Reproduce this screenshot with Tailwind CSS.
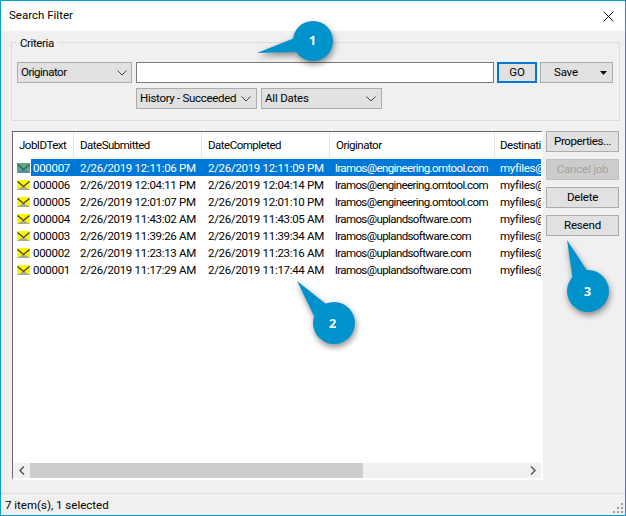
<!DOCTYPE html>
<html lang="en">
<head>
  <meta charset="UTF-8">
  <title>Search Filter</title>
  <script src="https://cdn.jsdelivr.net/npm/@tailwindcss/browser@4"></script>
</head>
<body class="bg-white">
  <div class="relative flex flex-col w-[626px] h-[516px] overflow-hidden border border-[#0a9ad0] bg-[#f0f0f0] font-['Roboto',sans-serif] text-[11.5px] leading-[16px] tracking-[-0.2px] text-black">
    <!-- Title bar -->
    <div class="flex items-center justify-between h-[30px] shrink-0 bg-white pl-[8px] pr-[10px]">
      <span class="pb-[2px] text-[11.5px] tracking-[0px]">Search Filter</span>
      <svg width="11" height="11" viewBox="0 0 11 11" class="mr-[1px]"><path d="M.5.5l10 10M10.5.5l-10 10" stroke="#111" fill="none"/></svg>
    </div>

    <!-- Criteria -->
    <div class="relative mt-[11px] ml-[10px] w-[609px] h-[79px] shrink-0 border border-[#dcdcdc] px-[5px] pt-[19px]">
      <span class="absolute left-[4px] top-[-8px] bg-[#f0f0f0] px-[4px] tracking-[-0.4px]">Criteria</span>
      <div class="flex h-[21px]">
        <div class="flex items-center justify-between w-[115px] border border-[#adadad] bg-[#e1e1e1] pl-[3px] pr-[4px]">
          <span class="pb-[2px] tracking-[-0.5px]">Originator</span>
          <svg width="10" height="6" viewBox="0 0 10 6"><path d="M.5.5L5 5 9.500.5" stroke="#444" fill="none"/></svg>
        </div>
        <div class="ml-[4px] w-[358px] border border-[#7a7a7a] bg-white"></div>
        <div class="flex items-center justify-center ml-[3px] w-[40px] border-2 border-[#0078d7] bg-[#e1e1e1] pb-[2px]">GO</div>
        <div class="relative flex items-center ml-[3px] w-[73px] border border-[#adadad] bg-[#e1e1e1] pl-[13px] pb-[2px]">
          <span>Save</span>
          <svg width="7" height="4" viewBox="0 0 7 4" class="absolute right-[5px] top-[8px]"><path d="M0 0h7L3.500 4z" fill="#111"/></svg>
        </div>
      </div>
      <div class="flex h-[21px] mt-[5px] ml-[119px]">
        <div class="flex items-center justify-between w-[121px] border border-[#adadad] bg-[#e1e1e1] pl-[3px] pr-[5px]">
          <span class="pb-[2px] whitespace-nowrap tracking-[-0.3px]">History - Succeeded</span>
          <svg width="10" height="6" viewBox="0 0 10 6"><path d="M.5.5L5 5 9.500.5" stroke="#444" fill="none"/></svg>
        </div>
        <div class="flex items-center justify-between ml-[4px] w-[121px] border border-[#adadad] bg-[#e1e1e1] pl-[3px] pr-[5px]">
          <span class="pb-[2px]">All Dates</span>
          <svg width="10" height="6" viewBox="0 0 10 6"><path d="M.5.5L5 5 9.500.5" stroke="#444" fill="none"/></svg>
        </div>
      </div>
    </div>

    <!-- List and buttons -->
    <div class="flex mt-[10px] ml-[11px] h-[349px] shrink-0">
      <div class="flex flex-col w-[531px] border-t border-l border-r-2 border-b-2 border-t-[#696969] border-l-[#696969] border-r-white border-b-white bg-white">
        <div class="flex-1 overflow-hidden">
          <div class="grid grid-cols-[61px_128px_128px_165px_60px] h-[27px] w-[542px] items-stretch tracking-[-0.5px]">
            <div class="border-r border-[#e5e5e5] pl-[6px] pt-[5px] mb-[1px]">JobIDText</div>
            <div class="border-r border-[#e5e5e5] pl-[6px] pt-[5px] mb-[1px]">DateSubmitted</div>
            <div class="border-r border-[#e5e5e5] pl-[6px] pt-[5px] mb-[1px]">DateCompleted</div>
            <div class="border-r border-[#e5e5e5] pl-[6px] pt-[5px] mb-[1px]">Originator</div>
            <div class="pl-[5px] pt-[5px] whitespace-nowrap">Destination</div>
          </div>
          <div id="rows" class="w-[542px]"></div>
        </div>
        <!-- Horizontal scrollbar -->
        <div class="flex items-center h-[15px] shrink-0 bg-[#f0f0f0]">
          <div class="flex items-center justify-center w-[17px]"><svg width="6" height="9" viewBox="0 0 6 9"><path d="M5 .5l-4 4 4 4" stroke="#555" stroke-width="1.500" fill="none"/></svg></div>
          <div class="w-[333px] h-full bg-[#cdcdcd]"></div>
          <div class="flex-1"></div>
          <div class="flex items-center justify-center w-[17px]"><svg width="6" height="9" viewBox="0 0 6 9"><path d="M1 .5l4 4-4 4" stroke="#555" stroke-width="1.500" fill="none"/></svg></div>
        </div>
      </div>
      <div class="flex flex-col gap-[7px] ml-[3px] w-[73px]">
        <div class="flex items-center justify-center h-[21px] border border-[#adadad] bg-[#e1e1e1] pb-[2px] tracking-[-0.4px]">Properties...</div>
        <div class="flex items-center justify-center h-[21px] border border-[#bfbfbf] bg-[#cccccc] pb-[2px] text-[#a3a3a3]">Cancel job</div>
        <div class="flex items-center justify-center h-[21px] border border-[#adadad] bg-[#e1e1e1] pb-[2px]">Delete</div>
        <div class="flex items-center justify-center h-[21px] border border-[#adadad] bg-[#e1e1e1] pb-[2px]">Resend</div>
      </div>
    </div>

    <!-- Status bar -->
    <div class="relative flex items-center mt-[13px] flex-1 border-t border-[#dcdcdc] pl-[4px]">
      <span class="tracking-[0px]">7 item(s), 1 selected</span>
      <svg width="11" height="11" viewBox="0 0 11 11" class="absolute right-[1px] bottom-[1px]" fill="#a0a0a0"><rect x="8" y="0" width="2" height="2"/><rect x="4" y="4" width="2" height="2"/><rect x="8" y="4" width="2" height="2"/><rect x="0" y="8" width="2" height="2"/><rect x="4" y="8" width="2" height="2"/><rect x="8" y="8" width="2" height="2"/></svg>
    </div>

    <!-- Numbered callouts -->
    <div class="absolute left-[256px] top-[20px] w-[80px] h-[44px] drop-shadow-[1px_3px_3px_rgba(0,0,0,0.45)]">
      <svg width="80" height="44" viewBox="0 0 80 44"><path d="M0 32L40 16V31z" fill="#0093cb"/><circle cx="56" cy="20" r="20" fill="#0093cb"/></svg>
      <span class="absolute left-[52px] top-[11px] font-['Open_Sans',sans-serif] text-[13px] font-bold text-white">1</span>
    </div>
    <div class="absolute left-[295px] top-[279px] w-[62px] h-[66px] drop-shadow-[1px_3px_3px_rgba(0,0,0,0.45)]">
      <svg width="62" height="66" viewBox="0 0 62 66"><path d="M1 1L30 24 18 36z" fill="#0093cb"/><circle cx="38" cy="43" r="21" fill="#0093cb"/></svg>
      <span class="absolute left-[33px] top-[35px] font-['Open_Sans',sans-serif] text-[13px] font-bold text-white">2</span>
    </div>
    <div class="absolute left-[565px] top-[238px] w-[46px] h-[74px] drop-shadow-[1px_3px_3px_rgba(0,0,0,0.45)]">
      <svg width="46" height="74" viewBox="0 0 46 74"><path d="M1 1L22 33 7 42z" fill="#0093cb"/><circle cx="22" cy="52" r="21" fill="#0093cb"/></svg>
      <span class="absolute left-[18px] top-[44px] font-['Open_Sans',sans-serif] text-[13px] font-bold text-white">3</span>
    </div>
  </div>

  <script>
    const jobs = [
      ['000007', '2/26/2019 12:11:06 PM', '2/26/2019 12:11:09 PM', 'lramos@engineering.omtool.com'],
      ['000006', '2/26/2019 12:04:11 PM', '2/26/2019 12:04:14 PM', 'lramos@engineering.omtool.com'],
      ['000005', '2/26/2019 12:01:07 PM', '2/26/2019 12:01:10 PM', 'lramos@engineering.omtool.com'],
      ['000004', '2/26/2019 11:43:02 AM', '2/26/2019 11:43:05 AM', 'lramos@uplandsoftware.com'],
      ['000003', '2/26/2019 11:39:26 AM', '2/26/2019 11:39:34 AM', 'lramos@uplandsoftware.com'],
      ['000002', '2/26/2019 11:23:13 AM', '2/26/2019 11:23:16 AM', 'lramos@uplandsoftware.com'],
      ['000001', '2/26/2019 11:17:29 AM', '2/26/2019 11:17:44 AM', 'lramos@uplandsoftware.com'],
    ];

    // Selected row first, rest unread (yellow envelope)
    document.getElementById('rows').innerHTML = jobs.map((job, i) => {
      const selected = i === 0;
      const body = selected ? '#5fa878' : '#fdf600';
      const line = selected ? '#2a5d86' : '#3f3f30';
      const base = selected ? '#4f86b0' : '#a9a98f';
      return `
        <div class="relative grid grid-cols-[61px_128px_128px_165px_60px] h-[17px] items-center whitespace-nowrap tracking-[-0.3px] ${selected ? 'text-white' : ''}">
          ${selected ? '<div class="absolute left-[18px] top-0 bottom-0 right-[1px] bg-[#0078d7]"></div>' : ''}
          <div class="relative flex items-center pl-[4px] gap-[3px]">
            <svg width="13" height="10" viewBox="0 0 13 10"><path d="M0 0h13v10H0z" fill="${body}"/><path d="M0 10l6.500-4 6.500 4z" fill="${base}"/><path d="M.5 1.500l6 5 6-5" stroke="${line}" stroke-width="1.300" fill="none"/></svg>
            <span>${job[0]}</span>
          </div>
          <div class="relative pl-[6px]">${job[1]}</div>
          <div class="relative pl-[6px]">${job[2]}</div>
          <div class="relative pl-[5px] tracking-[-0.6px]">${job[3]}</div>
          <div class="relative pl-[5px]">myfiles@omtool.com</div>
        </div>`;
    }).join('');
  </script>
</body>
</html>
